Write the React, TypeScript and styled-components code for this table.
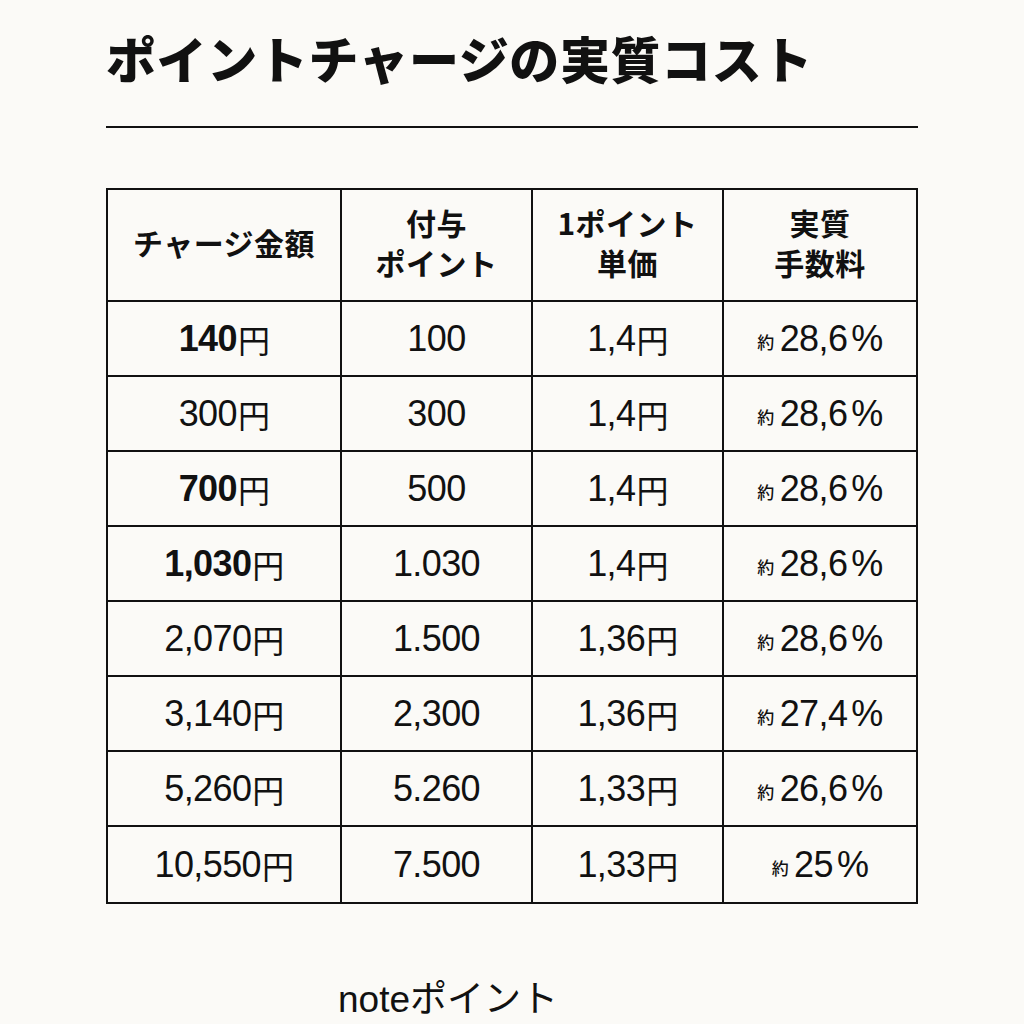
import styled, { createGlobalStyle } from "styled-components";

const Global = createGlobalStyle`
  html, body {
    margin: 0;
    padding: 0;
    background: #fbfaf7;
  }
  body {
    font-family: "Noto Sans", "Noto Sans CJK JP", sans-serif;
    color: #111;
  }
`;

const Page = styled.main`
  width: 1024px;
  height: 1024px;
  box-sizing: border-box;
  padding: 24px 106px 0 106px;
  overflow: hidden;
`;

const Title = styled.h1`
  margin: 0;
  font-size: 50px;
  line-height: 66px;
  font-weight: 900;
  letter-spacing: 0.6px;
  font-family: "Noto Sans CJK JP", sans-serif;
`;

const Rule = styled.div`
  margin-top: 36px;
  height: 2px;
  background: #111;
`;

const Table = styled.div`
  margin-top: 60px;
  display: grid;
  grid-template-columns: 234px 191px 191px 1fr;
  grid-template-rows: 112px repeat(8, 75px);
  border: 2px solid #111;
  box-sizing: border-box;
  width: 812px;
`;

const Cell = styled.div<{ $head?: boolean; $bold?: boolean; $last?: boolean; $bottom?: boolean }>`
  display: flex;
  align-items: center;
  justify-content: center;
  text-align: center;
  border-right: ${({ $last }) => ($last ? "0" : "2px solid #111")};
  border-bottom: ${({ $bottom }) => ($bottom ? "0" : "2px solid #111")};
  font-family: ${({ $head }) =>
    $head ? `"Noto Sans CJK JP", sans-serif` : `"Liberation Sans", "Noto Sans CJK JP", sans-serif`};
  font-size: ${({ $head }) => ($head ? "30px" : "36px")};
  line-height: ${({ $head }) => ($head ? "40px" : "1")};
  font-weight: ${({ $head, $bold }) => ($head || $bold ? 700 : 400)};
  letter-spacing: ${({ $head }) => ($head ? "0.5px" : "-0.6px")};
  padding-bottom: ${({ $head }) => ($head ? "6px" : "0")};
`;

const Yen = styled.span`
  font-family: "Noto Sans CJK JP", sans-serif;
  font-size: 32px;
  font-weight: 400;
  margin-left: 1px;
`;

const Approx = styled.span`
  font-family: "Noto Sans CJK JP", sans-serif;
  font-size: 17px;
  font-weight: 500;
  margin-right: 6px;
  align-self: center;
  padding-top: 6px;
`;

const Pct = styled.span`
  margin-left: 4px;
`;

const Footer = styled.div`
  margin-top: 76px;
  padding-left: 232px;
  font-family: "Liberation Sans", "Noto Sans CJK JP", sans-serif;
  font-size: 37px;
  line-height: 40px;
  letter-spacing: 0;
`;

type Row = { charge: string; bold?: boolean; points: string; unit: string; fee: string };

const rows: Row[] = [
  { charge: "140", bold: true, points: "100", unit: "1,4", fee: "28,6" },
  { charge: "300", points: "300", unit: "1,4", fee: "28,6" },
  { charge: "700", bold: true, points: "500", unit: "1,4", fee: "28,6" },
  { charge: "1,030", bold: true, points: "1.030", unit: "1,4", fee: "28,6" },
  { charge: "2,070", points: "1.500", unit: "1,36", fee: "28,6" },
  { charge: "3,140", points: "2,300", unit: "1,36", fee: "27,4" },
  { charge: "5,260", points: "5.260", unit: "1,33", fee: "26,6" },
  { charge: "10,550", points: "7.500", unit: "1,33", fee: "25" },
];

const heads = [
  ["チャージ金額"],
  ["付与", "ポイント"],
  ["1ポイント", "単価"],
  ["実質", "手数料"],
];

export default function App() {
  return (
    <>
      <Global />
      <Page>
        <Title>ポイントチャージの実質コスト</Title>
        <Rule />
        <Table>
          {heads.map((lines, i) => (
            <Cell key={i} $head $last={i === 3}>
              <div>
                {lines.map((l, j) => (
                  <div key={j}>{l}</div>
                ))}
              </div>
            </Cell>
          ))}
          {rows.map((r, i) => {
            const bottom = i === rows.length - 1;
            return [
              <Cell key={`a${i}`} $bold={r.bold} $bottom={bottom}>
                {r.charge}
                <Yen>円</Yen>
              </Cell>,
              <Cell key={`b${i}`} $bottom={bottom}>
                {r.points}
              </Cell>,
              <Cell key={`c${i}`} $bottom={bottom}>
                {r.unit}
                <Yen>円</Yen>
              </Cell>,
              <Cell key={`d${i}`} $last $bottom={bottom}>
                <Approx>約</Approx>
                {r.fee}
                <Pct>%</Pct>
              </Cell>,
            ];
          })}
        </Table>
        <Footer>noteポイント</Footer>
      </Page>
    </>
  );
}
